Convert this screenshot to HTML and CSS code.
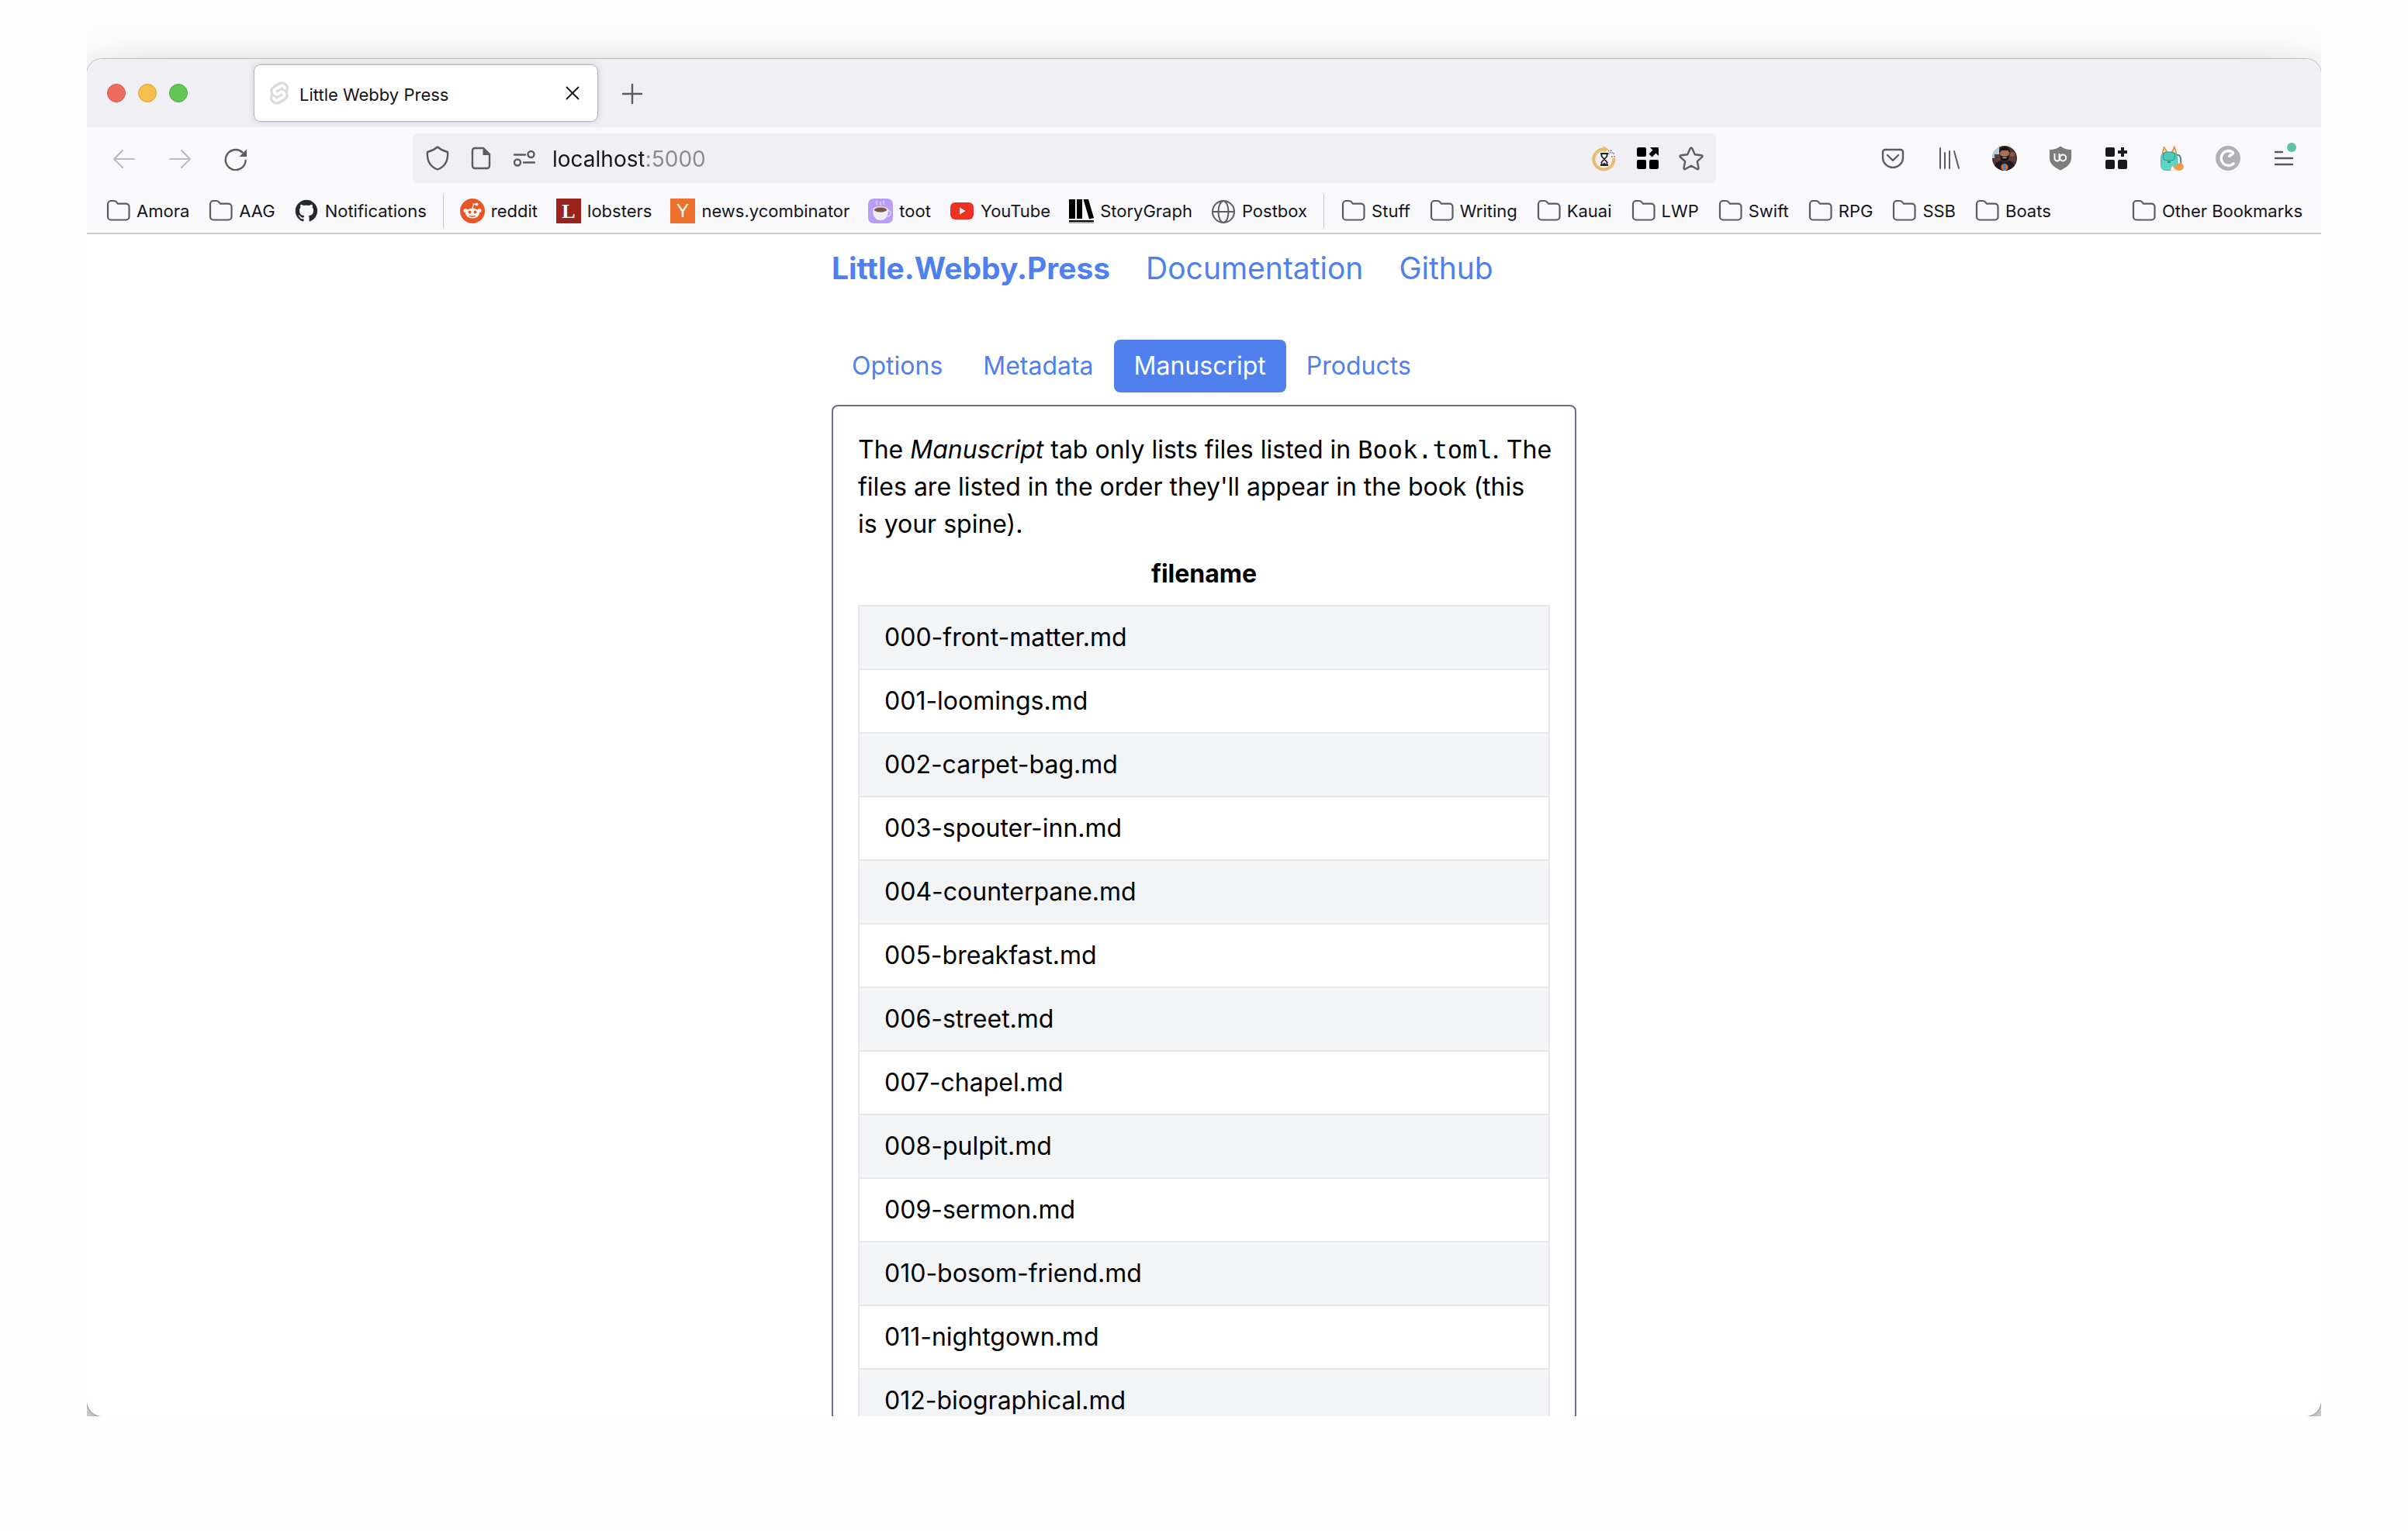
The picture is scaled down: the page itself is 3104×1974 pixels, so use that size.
FILE: index.html
```html
<!DOCTYPE html>
<html lang="en">
<head>
<meta charset="utf-8">
<meta name="viewport" content="width=device-width, initial-scale=1">
<title>Little Webby Press</title>
<link rel="stylesheet" href="styles.css">
</head>
<body>
<svg class="sprite" aria-hidden="true">
  <symbol id="folder" viewBox="0 0 32 32"><path d="M3 7a4 4 0 0 1 4-4h4.500a3 3 0 0 1 2.300 1.100L16 6.700h10.500A4 4 0 0 1 30.500 10.700V23.500a4 4 0 0 1-4 4H7a4 4 0 0 1-4-4Z" fill="none" stroke="currentColor" stroke-width="2.200"/></symbol>
</svg>
<div class="frame">
<div class="window">
  <header class="tabstrip">
    <div class="lights"><button class="light red" aria-label="Close window"></button><button class="light yellow" aria-label="Minimise window"></button><button class="light green" aria-label="Zoom window"></button></div>
    <div class="tab">
      <svg class="icon favicon" viewBox="-1 -1 26 26"><path fill="currentColor" d="M10.354 21.125a4.44 4.44 0 0 1-4.765-1.767 4.109 4.109 0 0 1-.703-3.107 3.898 3.898 0 0 1 .134-.522l.105-.321.287.21a7.21 7.21 0 0 0 2.186 1.092l.208.063-.02.208a1.253 1.253 0 0 0 .226.83 1.337 1.337 0 0 0 1.435.533 1.231 1.231 0 0 0 .343-.15l5.59-3.562a1.164 1.164 0 0 0 .524-.778 1.242 1.242 0 0 0-.211-.937 1.338 1.338 0 0 0-1.435-.533 1.23 1.23 0 0 0-.343.15l-2.133 1.36a4.078 4.078 0 0 1-1.135.499 4.44 4.44 0 0 1-4.765-1.766 4.108 4.108 0 0 1-.702-3.108 3.855 3.855 0 0 1 1.742-2.582l5.589-3.563a4.072 4.072 0 0 1 1.135-.499 4.44 4.44 0 0 1 4.765 1.767 4.109 4.109 0 0 1 .703 3.107 3.943 3.943 0 0 1-.134.522l-.105.321-.286-.21a7.204 7.204 0 0 0-2.187-1.093l-.208-.063.02-.207a1.255 1.255 0 0 0-.226-.831 1.337 1.337 0 0 0-1.435-.532 1.231 1.231 0 0 0-.343.15L8.62 9.368a1.162 1.162 0 0 0-.524.778 1.24 1.24 0 0 0 .211.937 1.338 1.338 0 0 0 1.435.533 1.235 1.235 0 0 0 .344-.151l2.132-1.36a4.067 4.067 0 0 1 1.135-.498 4.44 4.44 0 0 1 4.765 1.766 4.108 4.108 0 0 1 .702 3.108 3.857 3.857 0 0 1-1.742 2.583l-5.589 3.562a4.072 4.072 0 0 1-1.135.499m10.358-17.95C18.484-.015 14.082-.96 10.9 1.068L5.31 4.63a6.412 6.412 0 0 0-2.896 4.295 6.753 6.753 0 0 0 .666 4.336 6.43 6.43 0 0 0-.96 2.396 6.833 6.833 0 0 0 1.168 5.167c2.229 3.19 6.63 4.135 9.812 2.108l5.59-3.562a6.41 6.41 0 0 0 2.896-4.295 6.756 6.756 0 0 0-.665-4.336 6.429 6.429 0 0 0 .958-2.396 6.831 6.831 0 0 0-1.167-5.168Z"/></svg>
      <span class="tab-title">Little Webby Press</span>
      <button class="tab-close" aria-label="Close tab"><svg class="icon" viewBox="0 0 32 32"><path d="M8.500 8.500l15 15M23.500 8.500l-15 15" stroke="currentColor" stroke-width="1.800" stroke-linecap="round"/></svg></button>
    </div>
    <button class="new-tab" aria-label="New tab"><svg class="icon" viewBox="0 0 32 32"><path d="M16 5v24M4 17h24" stroke="currentColor" stroke-width="2.400" stroke-linecap="round"/></svg></button>
  </header>

  <div class="toolbar">
    <button class="tool faint" aria-label="Back"><svg class="icon" viewBox="0 0 32 32"><path d="M29 17H3M14 6L3 17l11 11" class="line"/></svg></button>
    <button class="tool faint" aria-label="Forward"><svg class="icon" viewBox="0 0 32 32"><path d="M3 17h26M18 6l11 11-11 11" class="line"/></svg></button>
    <button class="tool" aria-label="Reload"><svg class="icon" viewBox="0 0 32 32"><path d="M28.700 19A13 13 0 1 1 24.500 8.500" class="line thick"/><path d="M30 4.500V14h-9.500Z" fill="currentColor"/></svg></button>
    <div class="urlbar">
      <svg class="icon" viewBox="0 0 32 32"><path d="M16 1.500c3.500 3 8 5.200 13 6.500.8 11-2.500 18.500-13 22.500C5.500 26.500 2.200 19 3 8c5-1.300 9.500-3.500 13-6.500Z" class="line thick"/></svg>
      <svg class="icon" viewBox="0 0 32 32"><path d="M8 3h11l8 8v15a3 3 0 0 1-3 3H8a3 3 0 0 1-3-3V6a3 3 0 0 1 3-3Z" class="line thick"/><path d="M18.500 3v9H28v-1.500L20 2.500Z" fill="currentColor"/></svg>
      <svg class="icon" viewBox="0 0 32 32"><g class="line thick"><path d="M3 11.500h14M15 21.500h14"/><circle cx="24.500" cy="11" r="4"/><circle cx="7" cy="21.500" r="4"/></g></svg>
      <input class="url" type="text" value="localhost:5000" aria-label="Address">
      <svg class="icon" viewBox="0 0 32 32"><path d="M28 14.500A13 13 0 1 1 14.500 4.500" fill="none" stroke="#e9bd68" stroke-width="4" transform="rotate(6 16 17)"/><path d="M14.500 0l7 4.500-6.500 4.500Z" fill="#e9bd68"/><path d="M11 10h10M11 25h10M12.500 10.500v3l7 7.500v3.500M19.500 10.500v3l-7 7.500v3.500" fill="none" stroke="#222" stroke-width="1.800"/><path d="M13 24.500l3-3 3 3Z" fill="#222"/><path d="M21 6l3 3M24.500 5.500l2.500 5.500M21 10l3 1M28 9v2M25 14h2M29 13v2" stroke="#555" stroke-width="1.300" stroke-dasharray="1.500 1.500"/></svg>
      <svg class="icon" viewBox="0 0 32 32" fill="#000"><rect x="2" y="2" width="12" height="12" rx="2"/><rect x="2" y="18" width="12" height="12" rx="2"/><rect x="18" y="18" width="12" height="12" rx="2"/><path d="M19 2h9.500A1.500 1.500 0 0 1 30 3.500V13l-3.500-3.500-5 5-4-4 5-5Z"/></svg>
      <svg class="icon" viewBox="0 0 32 32"><path d="M16 2.500c.6 0 1 .3 1.300 1l3.500 7.700 8.500 1c1.200.2 1.600 1.400.8 2.200l-6.300 5.800 1.700 8.400c.2 1.200-.8 1.900-1.900 1.400L16 25.800 8.400 30c-1.100.5-2.100-.2-1.900-1.400l1.700-8.400-6.300-5.800c-.8-.8-.4-2 .8-2.200l8.500-1 3.500-7.700c.3-.7.7-1 1.300-1Z" class="line thick"/></svg>
    </div>
    <button class="tool" aria-label="Save to Pocket"><svg class="icon" viewBox="0 0 32 32"><path d="M6 5h20a3 3 0 0 1 3 3v7a13 13 0 0 1-26 0V8a3 3 0 0 1 3-3Z" class="line thick"/><path d="M9 12l7 7 7-7" class="line thick"/></svg></button>
    <button class="tool" aria-label="Library"><svg class="icon" viewBox="0 0 32 32"><path d="M5 3v26M11 9v20M17 7v22M23 7l6 22" class="line"/></svg></button>
    <button class="tool" aria-label="Profile"><svg class="icon" viewBox="0 0 32 32"><clipPath id="round"><circle cx="16" cy="16" r="16"/></clipPath><g clip-path="url(#round)"><path fill="#4b3430" d="M0 0h32v32H0z"/><path fill="#b9cddc" d="M0 0h9v16H0z"/><path fill="#5e3d35" d="M3 11h8v9H3zM21 10h9v10h-9z"/><circle cx="26" cy="11" r="3" fill="#8a5a4a"/><ellipse cx="16" cy="11" rx="6" ry="8" fill="#a86f57"/><path fill="#1c1210" d="M9.500 9C9 3 12 1 16 1s7 2 6.500 8L21 6h-9ZM10 11c1 2 3 3 6 3s5-1 6-3c0 6-2 9-6 9s-6-3-6-9Z"/><path d="M13.500 15.500h5" stroke="#e8cfc4" stroke-width="1.200"/><path fill="#1d1824" d="M1 32c1-9 6-12 10-13 3 3 7 3 10 0 5 1 9 5 10 13Z"/><circle cx="16" cy="27.500" r="4.500" fill="#e66a25"/><path fill="#3e86c8" d="M14 24h3l1 8h-3Z"/></g></svg></button>
    <button class="tool" aria-label="uBlock Origin"><svg class="icon" viewBox="0 0 32 32"><path fill="#7d7d7d" d="M16 .5C20 3.500 25 5 30 5v11c0 8-7 12-14 15.500C9 28 2 24 2 16V5C7 5 12 3.500 16 .5Z"/><g fill="none" stroke="#fff" stroke-width="2"><path d="M8.500 10v6a3.500 3.500 0 0 0 6 2.500V10"/><circle cx="19.200" cy="15.500" r="4"/></g></svg></button>
    <button class="tool" aria-label="Extensions"><svg class="icon" viewBox="0 0 32 32" fill="#18191d"><rect x="2" y="2" width="12" height="12" rx="2"/><rect x="2" y="18" width="12" height="12" rx="2"/><rect x="18" y="18" width="12" height="12" rx="2"/><path d="M22 2h4v4h4v4h-4v4h-4v-4h-4V6h4Z"/></svg></button>
    <button class="tool" aria-label="Backpack"><svg class="icon" viewBox="0 0 32 32"><path fill="#f3a35c" stroke="#d98443" d="M3 11L5.500 1l5 8ZM15 9l4-8.500L22 11Z"/><path fill="#fde3cd" d="M5 9l1-5 2 5ZM17 9l2-5 1 5Z"/><path fill="none" stroke="#3c8f83" stroke-width="2" d="M22 12c4-1 6 3 5 12"/><rect x="1.500" y="9" width="21" height="22.500" rx="6" fill="#5fd6c5" stroke="#48b5a6"/><rect x="4.500" y="8" width="15" height="11" rx="4" fill="#4fc8b7" stroke="#2a8f81"/><path d="M10 20h4v2h-4z" fill="#2a8f81"/><path fill="#ee9a52" d="M14 32c0-5 3-7 8-7 1-3 4-4 7-2 4 4 1 9-5 9Z"/><path fill="#fff0e2" d="M14 32c0-3 1-5 3-6 1 3 3 5 7 6Z"/></svg></button>
    <button class="tool" aria-label="Containers"><svg class="icon" viewBox="0 0 32 32"><circle cx="16" cy="16" r="16" fill="#b0b1b5"/><path d="M23 23A9.500 9.500 0 1 1 22.500 8.500C23 12 19.500 11 17.500 13.500" fill="none" stroke="#fff" stroke-width="3.400" stroke-linecap="round" stroke-linejoin="round"/></svg></button>
    <button class="tool" aria-label="Menu"><svg class="icon" viewBox="0 0 32 32"><path d="M5 8h9M5 16h22M5 24h22" class="line thick"/></svg><span class="dot"></span></button>
  </div>

  <nav class="bookmarks" aria-label="Bookmarks">
    <a href="#"><svg class="icon"><use href="#folder"/></svg>Amora</a>
    <a href="#"><svg class="icon"><use href="#folder"/></svg>AAG</a>
    <a href="#"><svg class="icon" viewBox="-1 -1 18 18"><path fill="#24292f" d="M8 0C3.580 0 0 3.580 0 8c0 3.540 2.290 6.530 5.470 7.590.4.070.55-.17.55-.38 0-.19-.010-.82-.010-1.490-2.010.37-2.530-.49-2.690-.94-.090-.23-.48-.94-.82-1.130-.28-.15-.68-.52-.010-.53.63-.010 1.080.58 1.230.82.72 1.210 1.870.87 2.330.66.070-.52.28-.87.51-1.070-1.780-.2-3.640-.89-3.640-3.950 0-.87.31-1.590.82-2.150-.080-.2-.36-1.020.080-2.120 0 0 .67-.21 2.200.82.64-.18 1.320-.27 2-.27s1.360.090 2 .27c1.530-1.040 2.200-.82 2.200-.82.44 1.100.16 1.920.080 2.120.51.56.82 1.270.82 2.150 0 3.070-1.870 3.750-3.650 3.950.29.25.54.73.54 1.480 0 1.070-.010 1.930-.010 2.200 0 .21.15.46.55.38A8.010 8.010 0 0 0 16 8c0-4.420-3.580-8-8-8Z"/></svg>Notifications</a>
    <span class="divider"></span>
    <a href="#"><svg class="icon" viewBox="0 0 32 32"><circle cx="16" cy="16" r="16" fill="#ea5528"/><g fill="#fff"><ellipse cx="16" cy="19" rx="9" ry="6.500"/><circle cx="7" cy="15.500" r="2.500"/><circle cx="25" cy="15.500" r="2.500"/><circle cx="21.500" cy="7.500" r="2"/></g><path d="M16 13l1.200-6 4.300 1" fill="none" stroke="#fff" stroke-width="1.400"/><circle cx="12.500" cy="17.500" r="1.900" fill="#ea5528"/><circle cx="19.500" cy="17.500" r="1.900" fill="#ea5528"/><path d="M12 22q4 2.500 8 0" fill="none" stroke="#ea5528" stroke-width="1.400"/></svg>reddit</a>
    <a href="#"><svg class="icon" viewBox="0 0 32 32"><path fill="#9a241b" d="M0 0h32v32H0z"/><text x="16" y="25" class="glyph slab">L</text></svg>lobsters</a>
    <a href="#"><svg class="icon" viewBox="0 0 32 32"><path fill="#ed702d" d="M0 0h32v32H0z"/><text x="16" y="24" class="glyph">Y</text></svg>news.ycombinator</a>
    <a href="#"><svg class="icon" viewBox="0 0 32 32"><rect width="32" height="32" rx="7" fill="#b89df7"/><path d="M11 3v5M16 4v5M20 3v5" stroke="#d6c8fb" stroke-width="2"/><circle cx="25" cy="19" r="4" fill="none" stroke="#d9cdf2" stroke-width="2"/><path fill="#f1eef3" d="M6 14h20c0 8-3 14-10 14S6 22 6 14Z"/><ellipse cx="16" cy="14" rx="10" ry="4" fill="#e4dcd8"/><ellipse cx="16" cy="14.500" rx="8" ry="3" fill="#7b5748"/></svg>toot</a>
    <a href="#"><svg class="icon" viewBox="0 0 32 32"><rect x="1" y="5" width="30" height="22" rx="6" fill="#ea3323"/><path fill="#fff" d="M13 11.500l7.500 4.500-7.500 4.500Z"/></svg>YouTube</a>
    <a href="#"><svg class="icon" viewBox="0 0 32 32"><path d="M0 1h8v25H0zM10 1h7v25h-7zM18.500 1H25l7 24-6 1.500ZM0 28h32v2H0z"/><path fill="#aaa" d="M0 30h32v2H0z"/></svg>StoryGraph</a>
    <a href="#"><svg class="icon" viewBox="0 0 32 32"><g class="line"><circle cx="16" cy="17" r="14"/><ellipse cx="16" cy="17" rx="6.500" ry="14"/><path d="M2 17h28"/></g></svg>Postbox</a>
    <span class="divider"></span>
    <a href="#"><svg class="icon"><use href="#folder"/></svg>Stuff</a>
    <a href="#"><svg class="icon"><use href="#folder"/></svg>Writing</a>
    <a href="#"><svg class="icon"><use href="#folder"/></svg>Kauai</a>
    <a href="#"><svg class="icon"><use href="#folder"/></svg>LWP</a>
    <a href="#"><svg class="icon"><use href="#folder"/></svg>Swift</a>
    <a href="#"><svg class="icon"><use href="#folder"/></svg>RPG</a>
    <a href="#"><svg class="icon"><use href="#folder"/></svg>SSB</a>
    <a href="#"><svg class="icon"><use href="#folder"/></svg>Boats</a>
    <a href="#" class="other"><svg class="icon"><use href="#folder"/></svg>Other Bookmarks</a>
  </nav>

  <main class="page">
    <nav class="site-nav" aria-label="Site"><a href="#" class="brand">Little.Webby.Press</a><a href="#">Documentation</a><a href="#">Github</a></nav>
    <div class="tabs" role="tablist"><button role="tab">Options</button><button role="tab">Metadata</button><button role="tab" class="active" aria-selected="true">Manuscript</button><button role="tab">Products</button></div>
    <section class="panel">
      <p>The <em>Manuscript</em> tab only lists files listed in <code>Book.toml</code>. The files are listed in the order they'll appear in the book (this is&nbsp;your&nbsp;spine).</p>
      <table>
        <thead><tr><th scope="col">filename</th></tr></thead>
        <tbody>
          <tr><td>000-front-matter.md</td></tr>
          <tr><td>001-loomings.md</td></tr>
          <tr><td>002-carpet-bag.md</td></tr>
          <tr><td>003-spouter-inn.md</td></tr>
          <tr><td>004-counterpane.md</td></tr>
          <tr><td>005-breakfast.md</td></tr>
          <tr><td>006-street.md</td></tr>
          <tr><td>007-chapel.md</td></tr>
          <tr><td>008-pulpit.md</td></tr>
          <tr><td>009-sermon.md</td></tr>
          <tr><td>010-bosom-friend.md</td></tr>
          <tr><td>011-nightgown.md</td></tr>
          <tr><td>012-biographical.md</td></tr>
        </tbody>
      </table>
    </section>
  </main>
</div>
</div>
</body>
</html>
```
FILE: styles.css
```css
* { box-sizing: border-box; }

body {
  margin: 0;
  height: 100vh;
  padding: 26px 112px 148px;
  background: #fefefe;
  color: #000;
  font-family: Inter, "Liberation Sans", sans-serif;
  overflow: hidden;
}

button {
  border: 0;
  padding: 0;
  background: none;
  color: inherit;
  font: inherit;
}

a { text-decoration: none; }

.sprite { position: absolute; width: 0; height: 0; }

/* The frame crops the window's shadow at its sides and bottom. */
.frame {
  height: 100%;
  padding-top: 50px;
  overflow: hidden;
}

.window {
  display: flex;
  flex-direction: column;
  height: 100%;
  overflow: hidden;
  border-radius: 20px;
  background: #fff;
  box-shadow: 0 0 0 1px #00000038, 0 40px 80px #00000080;
}

.icon { display: block; flex: none; width: 32px; height: 32px; }
.line { fill: none; stroke: currentColor; stroke-width: 2; stroke-linecap: round; stroke-linejoin: round; }
.thick { stroke-width: 2.400; }

/* Tab strip */
.tabstrip {
  display: flex;
  flex: none;
  align-items: center;
  height: 88px;
  padding-left: 26px;
  background: #f0eff4;
}

.lights { display: flex; gap: 16px; margin-right: 86px; }
.light { width: 24px; height: 24px; border-radius: 50%; }
.red { background: #ed6a5e; border: 1px solid #d5564b; }
.yellow { background: #f5bf4f; border: 1px solid #d9a33d; }
.green { background: #62c655; border: 1px solid #4faa43; }

.tab {
  display: flex;
  align-items: center;
  gap: 10px;
  width: 442px;
  height: 72px;
  padding: 0 16px;
  border-radius: 8px;
  background: #fff;
  box-shadow: 0 0 0 1px #b4b3bd, 0 0 8px #80808e66;
  font-size: 22px;
  color: #15141a;
}

.favicon { color: #dcdcdc; }
.tab-title { flex: 1; padding-top: 4px; }
.new-tab { margin-left: 29px; color: #5b5b66; }

/* Toolbar */
.toolbar {
  display: flex;
  flex: none;
  align-items: center;
  height: 80px;
  padding: 0 12px;
  background: #f9f9fb;
  color: #5b5b66;
}

.tool {
  position: relative;
  display: grid;
  place-items: center;
  flex: none;
  width: 72px;
  height: 64px;
}

.faint { color: #b9b9c0; }

.dot {
  position: absolute;
  top: 12px;
  right: 20px;
  width: 12px;
  height: 12px;
  border-radius: 50%;
  background: #5dc2a4;
}

.urlbar {
  display: flex;
  flex: 1;
  align-items: center;
  gap: 24px;
  height: 64px;
  margin: 0 192px;
  padding: 0 16px;
  border-radius: 8px;
  background: #f0eff4;
  color: #5b5b60;
}

.url {
  flex: 1;
  min-width: 0;
  height: 40px;
  padding: 2px 0 0;
  margin-left: -4px;
  border: 0;
  outline: 0;
  font: 28px Inter, "Liberation Sans", sans-serif;
  color: transparent;
  background: linear-gradient(90deg, #15141a 118px, #8b8a90 118px);
  background-clip: text;
}

/* Bookmarks */
.bookmarks {
  display: flex;
  flex: none;
  align-items: center;
  height: 58px;
  padding: 0 12px;
  border-bottom: 2px solid #cccccc;
  background: #f9f9fb;
  color: #5b5b66;
  font-size: 22px;
  line-height: 28px;
}

.bookmarks a {
  display: flex;
  align-items: center;
  gap: 8px;
  padding: 0 12px;
  color: #15141a;
  white-space: nowrap;
}

.bookmarks .icon { color: #5b5b66; }
.bookmarks .other { margin-left: auto; }
.divider { width: 1px; height: 44px; margin: 0 9px; background: #c4c4ca; }
.glyph { font: 24px "Liberation Sans", sans-serif; fill: #fff; text-anchor: middle; }
.slab { font: bold 26px "Liberation Serif", serif; }

/* Page */
.page {
  width: 960px;
  max-width: 100%;
  margin: 0 auto;
  padding-top: 14px;
  font-size: 32px;
  line-height: 48px;
}

.site-nav {
  display: flex;
  gap: 46px;
  font-size: 39px;
  line-height: 60px;
}

.site-nav a { color: #4f80ee; }
.site-nav .brand { font-weight: 700; }

.tabs { display: flex; margin: 62px 0 16px; }
.tabs button { height: 68px; padding: 0 26px; color: #4f80ee; }
.tabs .active { border-radius: 8px; background: #4f80ee; color: #fff; }

.panel { padding: 32px; border: 2px solid #6b7080; border-radius: 8px; }
.panel p { margin: 0 -8px 0 0; }
.panel code { font: 32px/1 "DejaVu Sans Mono", monospace; }

.panel table { width: 100%; border-collapse: collapse; }
.panel th { padding: 16px 32px; font-weight: 700; }
.panel td { padding: 16px 32px; border: 2px solid #e5e7eb; }
.panel tbody tr:nth-child(odd) { background: #f3f4f6; }
```
